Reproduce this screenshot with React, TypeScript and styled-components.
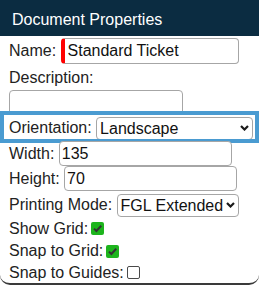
import React from 'react';
import styled, { createGlobalStyle, css } from 'styled-components';

const Global = createGlobalStyle`
  html, body { margin: 0; padding: 0; background: #fff; }
  body { font-family: "Liberation Sans", Arial, sans-serif; }
`;

const Panel = styled.div`
  width: 259px;
  box-sizing: border-box;
  border-bottom: 2px solid #3a3a3a;
  border-radius: 0 0 10px 10px;
  font-family: "Liberation Sans", Arial, sans-serif;
  font-size: 16px;
  color: #222;
  background: #fff;
`;

const Header = styled.div`
  height: 36px;
  box-sizing: border-box;
  padding: 3px 0 0 12px;
  display: flex;
  align-items: center;
  background: #0b2c41;
  color: #fff;
  font-size: 16px;
`;

const Body = styled.div`
  display: flex;
  flex-direction: column;
  padding: 1px 0 0 9px;
`;

const Row = styled.div<{ $h: number; $mt?: number; $gap?: number; $highlight?: boolean }>`
  position: relative;
  display: flex;
  align-items: center;
  gap: ${(p) => p.$gap ?? 4.4}px;
  height: ${(p) => p.$h}px;
  margin-top: ${(p) => p.$mt ?? 0}px;
  white-space: nowrap;
  ${(p) =>
    p.$highlight &&
    css`
      &::after {
        content: '';
        position: absolute;
        top: -4px;
        bottom: -2px;
        left: -9px;
        right: 0;
        border: 4px solid #4a9bd1;
        pointer-events: none;
      }
    `}
`;

const Label = styled.span`
  color: #222;
`;

const TextInput = styled.input<{ $w: number; $h: number; $invalid?: boolean }>`
  box-sizing: border-box;
  width: ${(p) => p.$w}px;
  height: ${(p) => p.$h}px;
  border: 1px solid #a6a6a6;
  border-radius: 4px;
  padding: 0 2px;
  font-family: "Liberation Sans", Arial, sans-serif;
  font-size: 16px;
  color: #111;
  background: #fff;
  outline: none;
  ${(p) =>
    p.$invalid &&
    css`
      border-left: 4px solid #f00;
      padding-left: 3px;
    `}
`;

const SelectWrap = styled.span`
  position: relative;
  display: inline-flex;
  svg {
    position: absolute;
    right: 4px;
    top: 50%;
    margin-top: -3px;
    pointer-events: none;
  }
`;

const NativeSelect = styled.select<{ $w: number; $h: number }>`
  box-sizing: border-box;
  appearance: none;
  -webkit-appearance: none;
  width: ${(p) => p.$w}px;
  height: ${(p) => p.$h}px;
  border: 1px solid #a6a6a6;
  border-radius: 4px;
  padding: 0 0 0 3px;
  font-family: "Liberation Sans", Arial, sans-serif;
  font-size: 16px;
  color: #111;
  background: #fff;
  outline: none;
`;

const Select: React.FC<{ w: number; h: number; value: string; options: string[] }> = ({ w, h, value, options }) => (
  <SelectWrap>
    <NativeSelect $w={w} $h={h} defaultValue={value}>
      {options.map((o) => (
        <option key={o}>{o}</option>
      ))}
    </NativeSelect>
    <svg width="9" height="6" viewBox="0 0 9 6">
      <path d="M1 1 L4.5 4.5 L8 1" fill="none" stroke="#1a1a1a" strokeWidth="2.2" />
    </svg>
  </SelectWrap>
);

const Box = styled.span<{ $checked: boolean }>`
  box-sizing: border-box;
  display: inline-flex;
  align-items: center;
  justify-content: center;
  width: 13px;
  height: 13px;
  border-radius: 2px;
  ${(p) =>
    p.$checked
      ? css`
          background: #1db41d;
        `
      : css`
          background: #fff;
          border: 1px solid #4a4a4a;
        `}
  svg {
    display: block;
  }
`;

const Check: React.FC<{ checked: boolean }> = ({ checked }) => (
  <Box $checked={checked}>
    {checked && (
      <svg width="13" height="13" viewBox="0 0 13 13">
        <path d="M3 6.6 L5.4 9 L10.2 3.8" fill="none" stroke="#333" strokeWidth="2" />
      </svg>
    )}
  </Box>
);

export default function App() {
  return (
    <>
      <Global />
      <Panel>
        <Header>Document Properties</Header>
        <Body>
          <Row $h={28}>
            <Label>Name:</Label>
            <TextInput $w={178} $h={26} $invalid defaultValue="Standard Ticket" />
          </Row>
          <Row $h={25}>
            <Label>Description:</Label>
          </Row>
          <Row $h={25}>
            <TextInput $w={174} $h={25} defaultValue="" />
          </Row>
          <Row $h={26} $highlight>
            <Label>Orientation:</Label>
            <Select w={157} h={23} value="Landscape" options={['Portrait', 'Landscape']} />
          </Row>
          <Row $h={25}>
            <Label>Width:</Label>
            <TextInput $w={173} $h={25} defaultValue="135" />
          </Row>
          <Row $h={25}>
            <Label>Height:</Label>
            <TextInput $w={173} $h={25} defaultValue="70" />
          </Row>
          <Row $h={24} $mt={2}>
            <Label>Printing Mode:</Label>
            <Select w={122} h={23} value="FGL Extended" options={['FGL', 'FGL Extended']} />
          </Row>
          <Row $h={23} $gap={3}>
            <Label>Show Grid:</Label>
            <Check checked />
          </Row>
          <Row $h={22} $gap={3}>
            <Label>Snap to Grid:</Label>
            <Check checked />
          </Row>
          <Row $h={21} $gap={3}>
            <Label>Snap to Guides:</Label>
            <Check checked={false} />
          </Row>
        </Body>
      </Panel>
    </>
  );
}
